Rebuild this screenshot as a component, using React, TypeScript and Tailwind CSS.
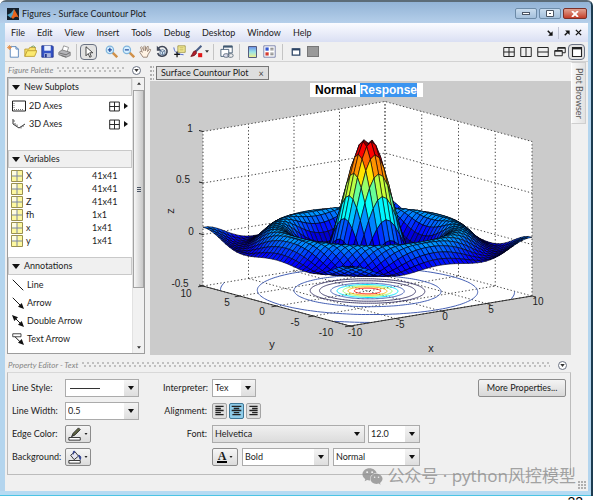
import React from "react";
import { FaWeixin } from "react-icons/fa";

type Point = [number, number];

const EXTENT = 10;
const STEP = 0.5;
const COUNT = 41;

// maps data coordinates onto the drawing
const project = (x: number, y: number, z: number): Point => [
  367.5 + 9.1 * x - 7.35 * y,
  291 - 1.5 * x - 2 * y - (z + 0.5) * 103,
];

const toPoints = (list: Point[]) =>
  list.map(([px, py]) => `${px.toFixed(2)},${py.toFixed(2)}`).join(" ");

const clamp = (v: number) => Math.max(0, Math.min(1, v));

const jet = (z: number) => {
  const t = Math.round(clamp((z + 0.217) / 1.176) * 63) / 63;
  const part = (center: number) =>
    Math.round(clamp(1.5 - Math.abs(4 * t - center)) * 255);
  return `rgb(${part(3)},${part(2)},${part(1)})`;
};

const height = (x: number, y: number) => {
  const r = Math.hypot(x, y);
  return r === 0 ? NaN : Math.sin(r) / r;
};

const buildFaces = () => {
  const faces: { points: string; fill: string }[] = [];
  // far corner first so that nearer faces cover it
  for (let i = COUNT - 2; i >= 0; i--) {
    for (let j = COUNT - 2; j >= 0; j--) {
      const x = -EXTENT + i * STEP;
      const y = -EXTENT + j * STEP;
      const corners = [
        [x, y],
        [x + STEP, y],
        [x + STEP, y + STEP],
        [x, y + STEP],
      ];
      const heights = corners.map(([a, b]) => height(a, b));
      if (heights.some((h) => Number.isNaN(h))) continue;
      faces.push({
        points: toPoints(corners.map(([a, b], k) => project(a, b, heights[k]))),
        fill: jet(heights[0]),
      });
    }
  }
  return faces;
};

const faces = buildFaces();

const contours = [
  { r: 12.57, z: 0 },
  { r: 9.42, z: 0 },
  { r: 6.28, z: 0 },
  { r: 4.9, z: -0.2 },
  { r: 4.1, z: -0.2 },
  { r: 3.14, z: 0 },
  { r: 2.6, z: 0.2 },
  { r: 2.09, z: 0.4 },
  { r: 1.66, z: 0.6 },
  { r: 1.13, z: 0.8 },
];

const contourPath = (r: number) => {
  let d = "";
  let drawing = false;
  for (let a = 0; a <= 360; a += 2) {
    const x = r * Math.cos((a * Math.PI) / 180);
    const y = r * Math.sin((a * Math.PI) / 180);
    if (Math.abs(x) > EXTENT || Math.abs(y) > EXTENT) {
      drawing = false;
      continue;
    }
    const [px, py] = project(x, y, -0.5);
    d += `${drawing ? "L" : "M"}${px.toFixed(1)} ${py.toFixed(1)}`;
    drawing = true;
  }
  return d;
};

const gridLines: Point[][] = [];
[-10, -5, 0, 5, 10].forEach((v) => {
  gridLines.push([project(v, 10, -0.5), project(v, 10, 1)]);
  gridLines.push([project(10, v, -0.5), project(10, v, 1)]);
  gridLines.push([project(v, -10, -0.5), project(v, 10, -0.5)]);
  gridLines.push([project(-10, v, -0.5), project(10, v, -0.5)]);
});
[0, 0.5, 1].forEach((z) => {
  gridLines.push([project(-10, 10, z), project(10, 10, z), project(10, -10, z)]);
});

const tickLabels: [string, number, number][] = [
  ["1", 190, 132],
  ["0.5", 183, 183],
  ["0", 191, 235],
  ["-0.5", 180, 287],
  ["10", 186, 297],
  ["5", 227, 306],
  ["0", 262, 315],
  ["-5", 295, 326],
  ["-10", 326, 336],
  ["-10", 355, 336],
  ["-5", 400, 328],
  ["0", 445, 320],
  ["5", 491, 313],
  ["10", 538, 305],
];

const SurfacePlot = () => {
  const walls = [
    project(-10, 10, 1),
    project(10, 10, 1),
    project(10, -10, 1),
    project(10, -10, -0.5),
    project(-10, -10, -0.5),
    project(-10, 10, -0.5),
  ];
  const axes = [
    project(-10, 10, -0.5),
    project(-10, -10, -0.5),
    project(10, -10, -0.5),
  ];
  return (
    <svg
      viewBox="150 97 421 258"
      className="block w-full"
      role="img"
      aria-label="Surface plot"
      fontFamily="Liberation Sans, Arial, sans-serif"
    >
      <polygon points={toPoints(walls)} fill="#fff" />
      {gridLines.map((line, i) => (
        <polyline
          key={i}
          points={toPoints(line)}
          fill="none"
          stroke="#444"
          strokeWidth="1"
          strokeDasharray="1.3 2.2"
        />
      ))}
      {contours.map(({ r, z }) => (
        <path
          key={r}
          d={contourPath(r)}
          fill="none"
          stroke={z === 0 ? "#4560b4" : z < 0 ? "#44406e" : jet(z)}
          strokeWidth="1"
        />
      ))}
      <polyline points={toPoints(axes)} fill="none" stroke="#222" strokeWidth="0.9" />
      {[-10, -5, 0, 5, 10].map((v) => {
        const [ax, ay] = project(-10, v, -0.5);
        const [bx, by] = project(v, -10, -0.5);
        return (
          <path
            key={v}
            d={`M${ax} ${ay}l-5 .8M${bx} ${by}l4 1`}
            stroke="#222"
            strokeWidth="0.9"
          />
        );
      })}
      {[-0.5, 0, 0.5, 1].map((z) => {
        const [px, py] = project(-10, 10, z);
        return <path key={z} d={`M${px} ${py}l-4 -1`} stroke="#222" strokeWidth="1" />;
      })}
      {faces.map((face, i) => (
        <polygon
          key={i}
          points={face.points}
          fill={face.fill}
          stroke="#00000c"
          strokeWidth="0.6"
          strokeLinejoin="round"
        />
      ))}
      <g fontSize="10" fill="#222" textAnchor="middle">
        {tickLabels.map(([label, x, y], i) => (
          <text key={i} x={x} y={y}>
            {label}
          </text>
        ))}
        <text x="272" y="348" fontSize="11">
          y
        </text>
        <text x="431" y="352" fontSize="11">
          x
        </text>
        <text transform="translate(174 211) rotate(-90)" fontSize="11">
          z
        </text>
      </g>
    </svg>
  );
};

const Icon = ({ children, size = 14 }: { children: React.ReactNode; size?: number }) => (
  <svg viewBox="0 0 16 16" width={size} height={size} fill="none" aria-hidden="true">
    {children}
  </svg>
);

const Caret = () => (
  <svg viewBox="0 0 6 4" width="6" height="4" aria-hidden="true">
    <path d="M0 0h6L3 4z" fill="#111" />
  </svg>
);

const fileTools = [
  {
    label: "New Figure",
    icon: (
      <>
        <path d="M4 2h7l3 3v10H4z" fill="#fff" stroke="#4678b4" />
        <path d="M11 2v3h3" stroke="#4678b4" />
        <path d="M1 1l4 4M5 1L1 5M3 0v6M0 3h6" stroke="#e58a3c" />
      </>
    ),
  },
  {
    label: "Open",
    icon: (
      <>
        <path d="M1 14V5h5l1-2h7v4" fill="#f7e26b" stroke="#b8962a" />
        <path d="M1 14l3-7h12l-3 7z" fill="#fbe96f" stroke="#b8962a" />
        <path d="M9 2q3-2 5 1" stroke="#5b8f3a" />
      </>
    ),
  },
  {
    label: "Save",
    icon: (
      <>
        <path d="M1 1h13l1 1v13H1z" fill="#3453c6" stroke="#1e2f86" />
        <path d="M4 1h8v6H4z" fill="#e9f0ff" />
        <path d="M4 10h8v5H4z" fill="#a9b4dc" />
        <path d="M5 11h2v4H5z" fill="#1e2f86" />
      </>
    ),
  },
  {
    label: "Print",
    icon: (
      <>
        <path d="M5 7l2-6 6 2-2 6z" fill="#fff" stroke="#888" />
        <path d="M1 9l4-3 10 3v4l-5 2-9-3z" fill="#b4b4b8" stroke="#777" />
        <path d="M2 10l8 2 5-3M4 13l6 2" stroke="#666" />
      </>
    ),
  },
];

const plotTools = [
  {
    label: "Zoom In",
    icon: (
      <>
        <path d="M9 9l6 6" stroke="#d09048" strokeWidth="3" />
        <circle cx="6" cy="6" r="4.5" fill="#d6f0ff" stroke="#7fb4dc" strokeWidth="1.5" />
        <path d="M6 3.5v5M3.5 6h5" stroke="#224a9c" strokeWidth="1.5" />
      </>
    ),
  },
  {
    label: "Zoom Out",
    icon: (
      <>
        <path d="M9 9l6 6" stroke="#d09048" strokeWidth="3" />
        <circle cx="6" cy="6" r="4.5" fill="#d6f0ff" stroke="#7fb4dc" strokeWidth="1.5" />
        <path d="M3.5 6h5" stroke="#224a9c" strokeWidth="1.5" />
      </>
    ),
  },
  {
    label: "Pan",
    icon: (
      <path
        d="M5 15L1 9q0-2 2-1l1 1-2-6q1-2 2 0l2 4V2q1-2 2 0v5l2-5q2-1 1.5 1L10.5 8 13 5q2 0 1 2l-3 5-1 3z"
        fill="#fff3e4"
        stroke="#8a7566"
      />
    ),
  },
  {
    label: "Rotate 3D",
    icon: (
      <>
        <path d="M3 4a6 6 0 1 1-1 6" stroke="#3f4656" strokeWidth="2" />
        <path d="M1 1v6h6z" fill="#3f4656" />
        <path
          d="M5 7l3-1.5 3 1.500v4l-3 1.500L5 11zM5 7l3 1.500L11 7M8 8.500v4"
          fill="#cfe0ee"
          stroke="#3c5a80"
          strokeWidth="0.8"
        />
      </>
    ),
  },
  {
    label: "Data Cursor",
    icon: (
      <>
        <path d="M6 1h9v8H6z" fill="#f6ee9a" stroke="#998f3c" />
        <path d="M8 3.5h5M8 6h5" stroke="#b5a94e" />
        <path d="M1 3c1 6 3 8 12 9" stroke="#3050c0" />
        <path d="M5 8v7M1.5 11.5h7" stroke="#111" strokeWidth="1.5" />
      </>
    ),
  },
  {
    label: "Brush",
    icon: (
      <>
        <path d="M14 1L7 8" stroke="#4b5f86" strokeWidth="2.5" />
        <path d="M7 7q-3 0-4 4l-2 3q5 0 7-4z" fill="#b3202c" stroke="#6b1820" />
        <path d="M10 10h5v5h-5z" fill="#e01818" />
      </>
    ),
  },
];

const ToolButton = ({
  label,
  pressed,
  children,
}: {
  label: string;
  pressed?: boolean;
  children: React.ReactNode;
}) => (
  <button
    aria-label={label}
    className={
      pressed
        ? "flex h-4 w-[17px] items-center justify-center rounded-sm border border-gray-500 bg-[#e2e2e2]"
        : "flex h-4 w-[17px] items-center justify-center"
    }
  >
    {children}
  </button>
);

const Separator = () => <span className="mx-1 h-4 w-px bg-[#c4c4c4]" />;

const Grip = () => (
  <span className="h-[6px] flex-1 bg-[radial-gradient(circle_at_1px_1px,#c0c0c0_1px,transparent_1px),radial-gradient(circle_at_3px_4px,#c0c0c0_1px,transparent_1px)] bg-[length:5px_6px]" />
);

const PanelHeader = ({ title }: { title: string }) => (
  <div className="flex items-center gap-1 pl-px pr-1 text-[8px] italic leading-[14px] text-[#858585]">
    <span>{title}</span>
    <Grip />
    <button
      aria-label={`${title} menu`}
      className="ml-1 flex h-[9px] w-[9px] items-center justify-center rounded-full border border-gray-500 bg-white"
    >
      <svg viewBox="0 0 6 4" width="5" height="3" aria-hidden="true">
        <path d="M0 0h6L3 4z" fill="#333" />
      </svg>
    </button>
  </div>
);

const SectionTitle = ({ children }: { children: React.ReactNode }) => (
  <button className="flex h-[18px] w-full items-center gap-1 border border-[#c9c9c9] bg-[#f0f0f0] px-[3px]">
    <svg viewBox="0 0 8 5" width="8" height="5" aria-hidden="true">
      <path d="M0 0h8L4 5z" fill="#111" />
    </svg>
    {children}
  </button>
);

const GridGlyph = () => (
  <Icon size={11}>
    <path d="M1 1.5h14v13H1zM8 1.5v13M1 8h14" stroke="#222" strokeWidth="1.4" />
  </Icon>
);

const variables = [
  ["X", "41x41"],
  ["Y", "41x41"],
  ["Z", "41x41"],
  ["fh", "1x1"],
  ["x", "1x41"],
  ["y", "1x41"],
];

const annotations = [
  { name: "Line", icon: <path d="M1 1l14 14" stroke="#111" strokeWidth="1.3" /> },
  {
    name: "Arrow",
    icon: (
      <>
        <path d="M1 1l11 11" stroke="#111" strokeWidth="1.3" />
        <path d="M16 16l-8-3 5-5z" fill="#111" />
      </>
    ),
  },
  {
    name: "Double Arrow",
    icon: (
      <>
        <path d="M3 3l10 10" stroke="#111" strokeWidth="1.3" />
        <path d="M16 16l-8-3 5-5zM0 0l8 3-5 5z" fill="#111" />
      </>
    ),
  },
  {
    name: "Text Arrow",
    icon: (
      <>
        <path d="M1 1h11v4H1z" fill="#fff" stroke="#111" />
        <path d="M4 5l8 8" stroke="#111" strokeWidth="1.3" />
        <path d="M16 16l-8-3 5-5z" fill="#111" />
      </>
    ),
  },
];

const FigurePalette = () => (
  <aside className="flex flex-col px-[2px] pb-px pt-px">
    <PanelHeader title="Figure Palette" />
    <div className="flex flex-1 border border-[#9c9c9c] bg-white">
      <div className="flex-1">
        <SectionTitle>New Subplots</SectionTitle>
        <ul className="h-[54px] pl-1 pr-[3px] pt-px">
          <li className="flex h-[18px] items-center gap-[3px]">
            <svg viewBox="0 0 14 12" width="14" height="12" fill="none" aria-hidden="true">
              <path d="M.5 1h13v10H.5z" stroke="#222" />
              <path d="M2 9.5h10M2 3v6" stroke="#777" strokeDasharray="1 1" />
            </svg>
            <span className="flex-1">2D Axes</span>
            <GridGlyph />
            <span className="rotate-[-90deg]">
              <Caret />
            </span>
          </li>
          <li className="flex h-[18px] items-center gap-[3px]">
            <svg viewBox="0 0 14 12" width="14" height="12" fill="none" aria-hidden="true">
              <path d="M1 1v5l6 4 6-4" stroke="#333" />
              <path d="M1 3h2M3 7v-2M5 8.5v-2M9 8.5v2M11 7v2" stroke="#666" />
            </svg>
            <span className="flex-1">3D Axes</span>
            <GridGlyph />
            <span className="rotate-[-90deg]">
              <Caret />
            </span>
          </li>
        </ul>
        <SectionTitle>Variables</SectionTitle>
        <table className="mt-px w-full text-left">
          <tbody>
            {variables.map(([name, size]) => (
              <tr key={name} className="h-[13px] leading-[13px]">
                <td className="w-[18px] pl-[3px]">
                  <svg viewBox="0 0 12 12" width="12" height="12" aria-hidden="true">
                    <path d="M.5.5h11v11H.5z" fill="#fdf8a0" stroke="#9a9050" />
                    <path d="M1 1h5v5H1z" fill="#fffde0" />
                    <path d="M6 1v10M1 6h10" stroke="#7a86a0" />
                  </svg>
                </td>
                <td>{name}</td>
                <td className="w-10">{size}</td>
              </tr>
            ))}
          </tbody>
        </table>
        <div className="h-[10px]" />
        <SectionTitle>Annotations</SectionTitle>
        <ul className="pl-1 pt-px">
          {annotations.map((item) => (
            <li key={item.name} className="flex h-[18px] items-center gap-[3px]">
              <Icon size={12}>{item.icon}</Icon>
              {item.name}
            </li>
          ))}
        </ul>
      </div>
      <div className="flex w-3 flex-col items-center border-l border-[#e2e2e2] bg-[#f1f1f1]">
        <span className="flex h-3 rotate-180 items-center">
          <svg viewBox="0 0 6 4" width="4" height="3" aria-hidden="true">
            <path d="M0 0h6L3 4z" fill="#333" />
          </svg>
        </span>
        <div className="flex h-[198px] w-full flex-col items-center justify-center gap-px border border-[#a2a2a2] bg-linear-to-r from-[#f6f6f6] to-[#c8c8c8]">
          <span className="h-px w-1 bg-gray-600" />
          <span className="h-px w-1 bg-gray-600" />
          <span className="h-px w-1 bg-gray-600" />
        </div>
        <span className="mt-auto flex h-3 items-center">
          <svg viewBox="0 0 6 4" width="4" height="3" aria-hidden="true">
            <path d="M0 0h6L3 4z" fill="#333" />
          </svg>
        </span>
      </div>
    </div>
  </aside>
);

const Select = ({
  label,
  value,
  className,
  id,
  drawn,
  flat,
}: {
  label: string;
  value: string;
  className: string;
  id?: string;
  drawn?: boolean;
  flat?: boolean;
}) => (
  <span className={`relative flex h-[18px] border border-[#ababab] bg-white ${className}`}>
    <select
      id={id}
      aria-label={label}
      className={
        flat
          ? "w-full appearance-none bg-linear-to-b from-[#f0f0f0] to-[#dcdcdc] pl-[2px] outline-none"
          : "w-full appearance-none bg-white pl-[2px] outline-none"
      }
    >
      <option>{value}</option>
    </select>
    <span className="pointer-events-none absolute inset-y-0 right-0 flex w-[14px] items-center justify-center bg-linear-to-b from-[#f4f4f4] to-[#dedede]">
      <Caret />
    </span>
    {drawn && <span className="pointer-events-none absolute left-1 top-2 h-px w-[30px] bg-[#333]" />}
  </span>
);

const SwatchButton = ({
  label,
  id,
  children,
}: {
  label: string;
  id?: string;
  children: React.ReactNode;
}) => (
  <button
    id={id}
    aria-label={label}
    className="flex h-[18px] w-[26px] items-center justify-center gap-[2px] rounded-xs border border-[#8c8c8c] bg-linear-to-b from-[#f6f6f6] to-[#dcdcdc]"
  >
    {children}
    <svg viewBox="0 0 6 4" width="4" height="2" aria-hidden="true">
      <path d="M0 0h6L3 4z" fill="#222" />
    </svg>
  </button>
);

const alignments = [
  { label: "Left", d: "M2 2h12M2 5h8M2 8h12M2 11h8M2 14h12" },
  { label: "Center", d: "M1 2h14M4 5h8M1 8h14M4 11h8M2 14h12" },
  { label: "Right", d: "M2 2h12M6 5h8M2 8h12M6 11h8M2 14h12" },
];

const PropertyEditor = () => (
  <section className="mr-[17px] pl-[2px] pt-[3px]">
    <PanelHeader title="Property Editor - Text" />
    <div className="flex items-start border border-[#bcbcbc] border-t-[#d8d8d8] px-1 pb-[6px] pt-[3px]">
      <div className="grid grid-cols-[53px_74px] auto-rows-[23px] items-center">
        <label htmlFor="line-style">Line Style:</label>
        <Select id="line-style" label="Line Style" value="" drawn className="w-full" />
        <label htmlFor="line-width">Line Width:</label>
        <Select id="line-width" label="Line Width" value="0.5" className="w-full" />
        <label htmlFor="edge-color">Edge Color:</label>
        <SwatchButton id="edge-color" label="Edge Color">
          <Icon>
            <path d="M1 12h13v3H1z" fill="#fff" stroke="#222" />
            <path d="M4 11l2-4 6-6 2 2-6 6z" fill="#5f6440" stroke="#222" />
          </Icon>
        </SwatchButton>
        <label htmlFor="background" className="whitespace-nowrap">
          Background:
        </label>
        <SwatchButton id="background" label="Background">
          <Icon>
            <path d="M1 12h13v3H1z" fill="#fff" stroke="#222" />
            <path d="M3 6l5-4 4 5-5 4z" fill="#e6e6f2" stroke="#222" />
            <path d="M6 5V2q1-2 2 0M12 6q4 1 2 5z" fill="#2c3c8c" stroke="#2c3c8c" />
          </Icon>
        </SwatchButton>
      </div>
      <div className="ml-6 grid grid-cols-[44px_1fr] auto-rows-[23px] items-center gap-x-[5px]">
        <label htmlFor="interpreter" className="text-right">
          Interpreter:
        </label>
        <Select id="interpreter" label="Interpreter" value="Tex" className="w-11" />
        <span className="text-right">Alignment:</span>
        <div className="flex gap-[2px]">
          {alignments.map((item) => (
            <button
              key={item.label}
              aria-label={item.label}
              className={
                item.label === "Center"
                  ? "flex h-4 w-[15px] items-center justify-center rounded-xs border border-[#3f7898] bg-[#8fcdea]"
                  : "flex h-4 w-[15px] items-center justify-center rounded-xs border border-[#a4a4a4] bg-[#e0e0e0]"
              }
            >
              <Icon size={11}>
                <path d={item.d} stroke="#222" strokeWidth="2" />
              </Icon>
            </button>
          ))}
        </div>
        <label htmlFor="font" className="text-right">
          Font:
        </label>
        <div className="flex gap-[3px]">
          <Select id="font" label="Font" value="Helvetica" flat className="w-[153px]" />
          <Select label="Font Size" value="12.0" className="w-[52px]" />
        </div>
        <span />
        <div className="flex gap-1">
          <SwatchButton label="Font Color">
            <span className="border-b-2 border-black px-px font-['Liberation_Serif',serif] text-xs font-bold leading-[10px]">
              A
            </span>
          </SwatchButton>
          <Select label="Font Weight" value="Bold" className="w-[87px]" />
          <Select label="Font Angle" value="Normal" className="w-[87px]" />
        </div>
      </div>
      <button className="ml-auto mt-[3px] h-[18px] w-[88px] rounded-xs border border-[#8c8c8c] bg-linear-to-b from-[#f4f4f4] to-[#d8d8d8]">
        More Properties...
      </button>
    </div>
  </section>
);

const menus = ["File", "Edit", "View", "Insert", "Tools", "Debug", "Desktop", "Window", "Help"];

const layouts = [
  { label: "Tile", d: "M1 2h14v12H1zM8 2v12M1 8h14" },
  { label: "Left/Right Tile", d: "M1 2h14v12H1zM8 2v12" },
  { label: "Top/Bottom Tile", d: "M1 2h14v12H1zM1 8h14" },
  { label: "Float", d: "M5 6V2h10v7h-4M5 3h10M1 6h10v7H1zM1 7h10" },
];

const App = () => {
  return (
    <div className="relative h-screen overflow-hidden bg-white font-['Lato','Open_Sans',sans-serif] text-[9px] leading-3 text-[#1c1c1c]">
      <div className="mr-[2px] rounded-t-md border-r-2 border-t-2 border-r-[#1d3c50] border-t-[#5c6c78] bg-[#b4d5ee]">
        <header className="flex h-[21px] items-center gap-[3px] rounded-t-sm bg-linear-to-b from-[#92b3d6] to-[#b5cfea] pl-[7px] pr-1 pt-[2px]">
          <svg viewBox="0 0 12 12" width="12" height="12" aria-hidden="true">
            <path d="M0 0h12v12H0z" fill="#14202c" />
            <path d="M0 7l4-2 3-4 1 4-4 5z" fill="#4fa3c8" />
            <path d="M7 1q2 3 5 9-2-2-4-1l-2 2-2-2q2-1 3-8z" fill="#e8641c" />
          </svg>
          <h1 className="flex-1">Figures - Surface Countour Plot</h1>
          <div className="flex gap-[2px]">
            <button
              aria-label="Minimize"
              className="flex h-[11px] w-[22px] items-center justify-center rounded-xs border border-[#6d8ba8] bg-linear-to-b from-[#c9dcee] to-[#a4c0dc]"
            >
              <span className="h-[3px] w-2 border border-gray-600 bg-white" />
            </button>
            <button
              aria-label="Maximize"
              className="flex h-[11px] w-[22px] items-center justify-center rounded-xs border border-[#6d8ba8] bg-linear-to-b from-[#c9dcee] to-[#a4c0dc]"
            >
              <svg viewBox="0 0 8 7" width="8" height="7" aria-hidden="true">
                <path d="M.5.5h7v6h-7z" fill="#fff" stroke="#4b5563" />
                <path d="M3 3h2v1H3z" fill="#4b5563" />
              </svg>
            </button>
            <button
              aria-label="Close"
              className="flex h-[11px] w-6 items-center justify-center rounded-xs border border-[#7c3028] bg-linear-to-b from-[#e0a090] to-[#c43c28]"
            >
              <svg viewBox="0 0 8 6" width="8" height="6" aria-hidden="true">
                <path d="M1 0l6 6M7 0L1 6" stroke="#fff" strokeWidth="1.8" />
              </svg>
            </button>
          </div>
        </header>

        <div className="ml-[5px] mr-[3px] bg-[#f0f0f0]">
          <nav className="flex h-[19px] items-center gap-3 bg-linear-to-b from-[#fbfcff] to-[#dadff3] pl-[6px] pr-[6px]">
            {menus.map((menu) => (
              <button key={menu}>{menu}</button>
            ))}
            <span className="ml-auto flex items-center gap-[5px]">
              <Icon size={6}>
                <path d="M2 2l8 8" stroke="#111" strokeWidth="4" />
                <path d="M15 3v12H3z" fill="#111" />
              </Icon>
              <span className="h-3 w-px bg-[#c0c4d4]" />
              <Icon size={6}>
                <path d="M2 14l8-8" stroke="#111" strokeWidth="4" />
                <path d="M3 1h12v12z" fill="#111" />
              </Icon>
              <Icon size={7}>
                <path d="M2 2l12 12M14 2L2 14" stroke="#111" strokeWidth="3" />
              </Icon>
            </span>
          </nav>

          <div className="flex h-5 items-center border-b border-[#d2d2d2] pr-[3px]">
            {fileTools.map((tool) => (
              <ToolButton key={tool.label} label={tool.label}>
                <Icon size={13}>{tool.icon}</Icon>
              </ToolButton>
            ))}
            <span className="mx-[3px] h-4 w-px bg-[#c4c4c4]" />
            <ToolButton label="Edit Plot" pressed>
              <Icon size={12}>
                <path d="M4 1v12l3-3 2 5 2-1-2-5h4z" fill="#fff" stroke="#111" />
              </Icon>
            </ToolButton>
            <span className="w-[6px]" />
            {plotTools.map((tool) => (
              <ToolButton key={tool.label} label={tool.label}>
                <Icon size={13}>{tool.icon}</Icon>
              </ToolButton>
            ))}
            <svg viewBox="0 0 6 4" width="4" height="3" aria-hidden="true">
              <path d="M0 0h6L3 4z" fill="#333" />
            </svg>
            <Separator />
            <ToolButton label="Link Plot">
              <Icon>
                <path d="M4 1h10v8H4z" fill="#fff" stroke="#405870" />
                <path d="M4 2h10" stroke="#405870" strokeWidth="2" />
                <path d="M1 5h9v8H1z" fill="#fff" stroke="#405870" />
                <rect x="4" y="10" width="6" height="4" rx="2" stroke="#5a6a7a" fill="#dde" />
                <rect x="9" y="10" width="6" height="4" rx="2" stroke="#5a6a7a" />
              </Icon>
            </ToolButton>
            <Separator />
            <ToolButton label="Insert Colorbar">
              <svg viewBox="0 0 9 12" width="9" height="12" aria-hidden="true">
                <defs>
                  <linearGradient id="bar" x2="0" y2="1">
                    <stop offset="0" stopColor="#6a8ce8" />
                    <stop offset=".5" stopColor="#9be4e8" />
                    <stop offset="1" stopColor="#f6ef86" />
                  </linearGradient>
                </defs>
                <path d="M.5.5h8v11h-8z" fill="url(#bar)" stroke="#555c80" />
              </svg>
            </ToolButton>
            <ToolButton label="Insert Legend">
              <Icon size={13}>
                <path d="M1 1h14v14H1z" fill="#fff" stroke="#6670a0" />
                <path d="M3 3h4v4H3z" fill="#3458d0" />
                <path d="M3 9h4v4H3z" fill="#d43c30" />
                <path d="M9 4h4M9 6h4M9 10h4M9 12h4" stroke="#555" />
              </Icon>
            </ToolButton>
            <Separator />
            <ToolButton label="Hide Plot Tools">
              <Icon size={10}>
                <path d="M2 3h12v10H2z" fill="#fff" stroke="#2c4464" strokeWidth="2" />
                <path d="M2 4h12" stroke="#2c4464" strokeWidth="3" />
              </Icon>
            </ToolButton>
            <ToolButton label="Show Plot Tools">
              <span className="h-[11px] w-3 border border-[#777] bg-[#999]" />
            </ToolButton>
            <span className="ml-auto flex">
              {layouts.map((item) => (
                <ToolButton key={item.label} label={item.label}>
                  <Icon size={12}>
                    <path d={item.d} stroke="#222" strokeWidth="1.3" />
                  </Icon>
                </ToolButton>
              ))}
              <ToolButton label="Maximize Figure" pressed>
                <Icon size={12}>
                  <path d="M2 2h12v12H2z" fill="#fff" stroke="#222" strokeWidth="1.5" />
                  <path d="M2 3h12" stroke="#222" strokeWidth="3" />
                </Icon>
              </ToolButton>
            </span>
          </div>

          <div className="grid grid-cols-[142px_1fr_17px]">
            <FigurePalette />
            <main className="ml-[3px] flex flex-col">
              <div className="flex h-[19px] items-end gap-[2px] pb-px">
                <span className="h-[14px] w-1 bg-[radial-gradient(circle_at_1px_1px,#b0b0b0_1px,transparent_1px)] bg-[length:3px_4px]" />
                <div className="flex h-[14px] items-center gap-[10px] border border-[#777] bg-[#dedede] px-1">
                  Surface Countour Plot
                  <button aria-label="Close tab" className="text-[9px] leading-none text-[#444]">
                    ×
                  </button>
                </div>
              </div>
              <div className="flex-1 bg-[#cbcbcb] pt-[2px]">
                <h2 className="ml-[160px] w-[113px] whitespace-nowrap bg-white pl-[5px] font-['Liberation_Sans',Arial,sans-serif] text-xs font-bold leading-[14px] text-black">
                  Normal <span className="bg-[#3a94f0] text-white">Response</span>
                </h2>
                <SurfacePlot />
              </div>
            </main>
            <div>
              <button className="h-[62px] w-[15px] border border-[#cfcfcf] border-l-white bg-linear-to-r from-[#f8f8f8] to-[#e2e2e2] text-[#555] [writing-mode:vertical-rl]">
                Plot Browser
              </button>
            </div>
          </div>

          <PropertyEditor />
          <div className="flex h-4 items-end justify-end p-[2px]">
            <span className="h-2 w-2 bg-[radial-gradient(circle_at_1px_1px,#b0b0b0_1px,transparent_1px)] bg-[length:3px_3px]" />
          </div>
        </div>
        <div className="h-[5px] border-b border-[#4cc4e4] bg-[#b6dbf3]" />
      </div>

      <p className="pr-3 text-right font-['Liberation_Sans',Arial,sans-serif] text-sm leading-[13px] text-black">
        22
      </p>

      <div className="pointer-events-none absolute bottom-3 right-[19px] flex items-center gap-1 font-['Noto_Sans','Noto_Sans_CJK_SC',sans-serif] text-[17px] leading-6 text-[#8d8d8d]/80">
        <FaWeixin size={21} />
        <span>公众号 · python风控模型</span>
      </div>
    </div>
  );
};

export default App;
